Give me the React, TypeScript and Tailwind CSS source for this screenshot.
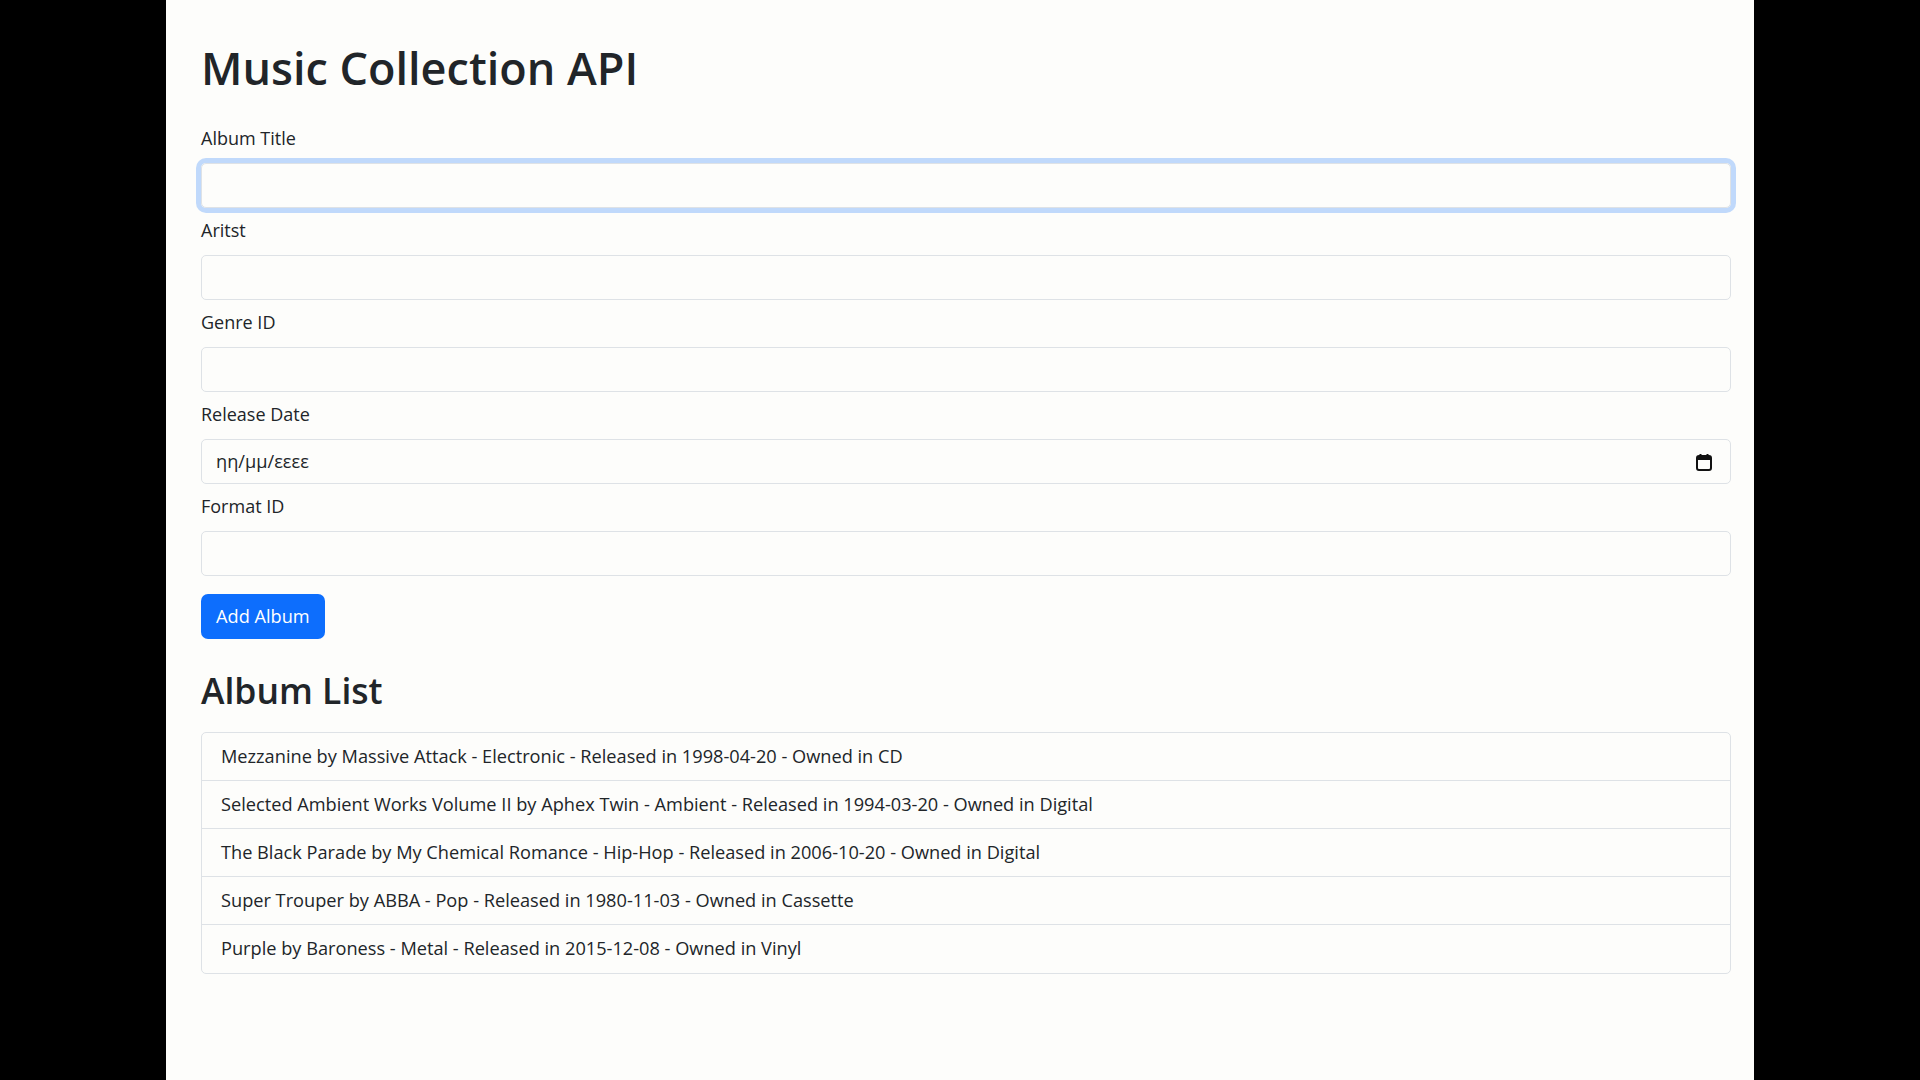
import { useState } from "react";

const albums = [
  "Mezzanine by Massive Attack - Electronic - Released in 1998-04-20 - Owned in CD",
  "Selected Ambient Works Volume II by Aphex Twin - Ambient - Released in 1994-03-20 - Owned in Digital",
  "The Black Parade by My Chemical Romance - Hip-Hop - Released in 2006-10-20 - Owned in Digital",
  "Super Trouper by ABBA - Pop - Released in 1980-11-03 - Owned in Cassette",
  "Purple by Baroness - Metal - Released in 2015-12-08 - Owned in Vinyl",
];

function CalendarIcon() {
  return (
    <svg width="16" height="18" viewBox="0 0 16 18" fill="none">
      <rect x="1" y="3" width="14" height="14" rx="2" stroke="#111" strokeWidth="2" />
      <rect x="1" y="3" width="14" height="4" fill="#111" />
      <rect x="3.5" y="1" width="2" height="3" fill="#111" />
      <rect x="10.5" y="1" width="2" height="3" fill="#111" />
    </svg>
  );
}

export default function App() {
  const [title, setTitle] = useState("");
  const [artist, setArtist] = useState("");
  const [genre, setGenre] = useState("");
  const [format, setFormat] = useState("");

  const inputCls =
    "w-full h-[45px] px-[14px] rounded-[5px] border border-[#dee2e6] bg-transparent text-[18.2px] text-[#212529] outline-none";
  const labelCls = "block h-[29px] leading-[29px] mb-[10px] text-[18px] text-[#212529]";

  return (
    <div className="min-h-screen bg-black flex justify-center font-['Open_Sans',sans-serif]">
      <div className="w-[1588px] min-h-screen bg-[#fdfdfb] pl-[35px] pr-[23px] pt-[39px]">
        <h1 className="text-[45px] leading-[58px] font-semibold text-[#212529] mb-[27px]">Music Collection API</h1>

        <div className="mb-[8px]">
          <label className={labelCls}>Album Title</label>
          <input
            className={inputCls + " border-[#86b7fe] shadow-[0_0_0_5px_rgba(13,110,253,0.25)]"}
            value={title}
            onChange={e => setTitle(e.target.value)}
          />
        </div>
        <div className="mb-[8px]">
          <label className={labelCls}>Aritst</label>
          <input className={inputCls} value={artist} onChange={e => setArtist(e.target.value)} />
        </div>
        <div className="mb-[8px]">
          <label className={labelCls}>Genre ID</label>
          <input className={inputCls} value={genre} onChange={e => setGenre(e.target.value)} />
        </div>
        <div className="mb-[8px]">
          <label className={labelCls}>Release Date</label>
          <div className="flex items-center h-[45px] px-[14px] rounded-[5px] border border-[#dee2e6]">
            <span className="flex-1 text-[18.2px] text-[#212529]">ηη/μμ/εεεε</span>
            <span className="mr-[4px]"><CalendarIcon /></span>
          </div>
        </div>
        <div className="mb-[8px]">
          <label className={labelCls}>Format ID</label>
          <input className={inputCls} value={format} onChange={e => setFormat(e.target.value)} />
        </div>

        <button className="mt-[10px] h-[45px] px-[15px] rounded-[7px] bg-[#0d6efd] text-white text-[18.2px]">
          Add Album
        </button>

        <h2 className="mt-[28px] mb-[19px] text-[35.5px] leading-[46px] font-semibold text-[#212529]">Album List</h2>

        <ul className="border border-[#dee2e6] rounded-[5px] divide-y divide-[#dee2e6]">
          {albums.map(a => (
            <li key={a} className="h-[48px] flex items-center px-[19px] text-[18.2px] text-[#212529]">
              {a}
            </li>
          ))}
        </ul>
      </div>
    </div>
  );
}
